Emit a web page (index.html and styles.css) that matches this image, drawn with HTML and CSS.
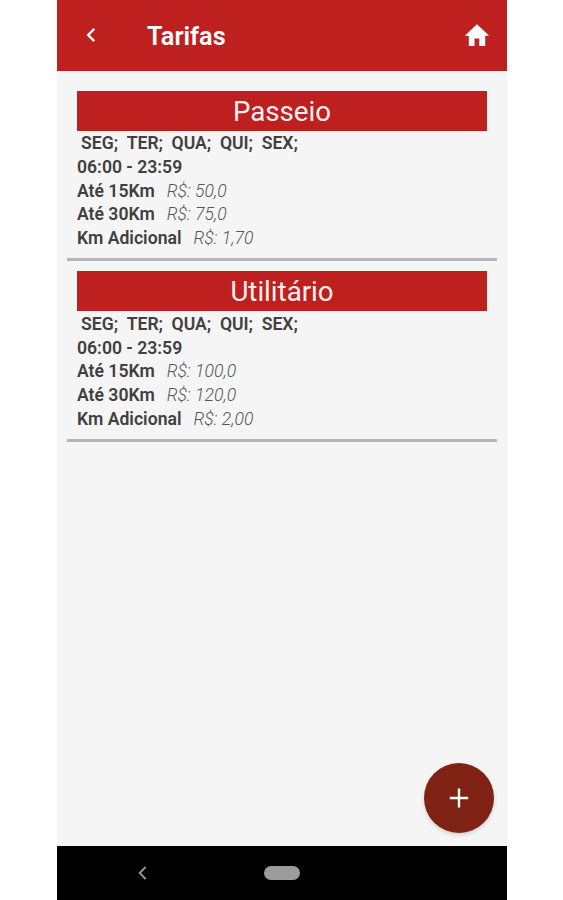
FILE: index.html
```
<!DOCTYPE html>
<html lang="pt-BR">
<head>
  <meta charset="UTF-8">
  <meta name="viewport" content="width=device-width, initial-scale=1.0">
  <title>Tarifas</title>
  <link rel="stylesheet" href="styles.css">
</head>
<body>
  <div class="phone">
    <!-- Top bar -->
    <header class="header">
      <a href="#" class="back" aria-label="Voltar">
        <svg width="10" height="16" viewBox="0 0 10 16"><path d="M8.2 1.9 2.2 8l6 6.1" fill="none" stroke="currentColor" stroke-width="2.4"/></svg>
      </a>
      <h1 class="title">Tarifas</h1>
      <a href="#" class="home" aria-label="Início">
        <svg width="26" height="22" viewBox="0 0 26 22"><path d="M10.5 22v-7.5h4.8V22h5.9V11.8h4L13 .3.8 11.8h4V22z" fill="currentColor"/></svg>
      </a>
    </header>

    <!-- Fare list -->
    <main class="content">
      <section class="fare">
        <h2 class="fare-title">Passeio</h2>
        <p class="days"><span>SEG;</span><span>TER;</span><span>QUA;</span><span>QUI;</span><span>SEX;</span></p>
        <p class="row">06:00 - 23:59</p>
        <p class="row">Até 15Km <em class="price">R$: 50,0</em></p>
        <p class="row">Até 30Km <em class="price">R$: 75,0</em></p>
        <p class="row">Km Adicional <em class="price">R$: 1,70</em></p>
      </section>
      <section class="fare">
        <h2 class="fare-title">Utilitário</h2>
        <p class="days"><span>SEG;</span><span>TER;</span><span>QUA;</span><span>QUI;</span><span>SEX;</span></p>
        <p class="row">06:00 - 23:59</p>
        <p class="row">Até 15Km <em class="price">R$: 100,0</em></p>
        <p class="row">Até 30Km <em class="price">R$: 120,0</em></p>
        <p class="row">Km Adicional <em class="price">R$: 2,00</em></p>
      </section>
    </main>

    <button class="fab" aria-label="Adicionar">
      <svg width="20" height="20" viewBox="0 0 20 20"><path d="M10 .5v19M.8 10h18.4" fill="none" stroke="currentColor" stroke-width="2.4"/></svg>
    </button>

    <!-- Android navigation -->
    <footer class="navbar">
      <svg class="nav-back" width="9" height="14" viewBox="0 0 9 14"><path d="M7.6 1 1.7 7l5.9 6" fill="none" stroke="currentColor" stroke-width="1.8"/></svg>
      <span class="nav-home"></span>
    </footer>
  </div>
</body>
</html>
```
FILE: styles.css
```
:root {
  --primary: #be1f1f;
  --accent: #7f2214;
  --background: #f5f5f5;
  --text: #404040;
}

* {
  margin: 0;
  padding: 0;
  box-sizing: border-box;
}

body {
  background-color: white;
  color: var(--text);
  font-family: Roboto, sans-serif;
}

.phone {
  position: relative;
  display: flex;
  flex-direction: column;
  width: 450px;
  height: 900px;
  margin-left: 57px;
  background-color: var(--background);
  overflow: hidden;
}

.header {
  display: flex;
  align-items: center;
  height: 70.5px;
  padding: 0 17px 0 29px;
  background-color: var(--primary);
  color: white;
}

.back,
.home {
  display: flex;
  color: white;
}

.title {
  margin-left: 51px;
  padding-top: 3px;
  font-size: 25.3px;
  font-weight: 600;
  line-height: 30px;
}

.home {
  margin-left: auto;
}

.content {
  flex: 1;
  padding: 10px;
}

.fare {
  padding: 10px 10px 7.4px;
  border-bottom: 3px solid #b5b5b5;
}

.fare-title {
  height: 40px;
  margin-bottom: 1.5px;
  background-color: var(--primary);
  color: #fff0f0;
  font-size: 27.7px;
  font-weight: 400;
  line-height: 42px;
  text-align: center;
}

.days,
.row {
  font-size: 17.6px;
  font-weight: 600;
  line-height: 23.8px;
}

.days {
  display: flex;
  gap: 8.6px;
  padding-left: 4px;
}

.price {
  margin-left: 7.6px;
  color: #555;
  font-weight: 300;
}

.fab {
  position: absolute;
  right: 13px;
  bottom: 67.5px;
  display: flex;
  align-items: center;
  justify-content: center;
  width: 70px;
  height: 70px;
  border: none;
  border-radius: 50%;
  background-color: var(--accent);
  color: white;
  box-shadow: 0 2px 4px rgba(0, 0, 0, 0.15);
}

.navbar {
  display: flex;
  align-items: center;
  height: 54px;
  padding-left: 81px;
  background-color: black;
  color: #999;
}

.nav-home {
  width: 36px;
  height: 14px;
  margin-left: 117px;
  border-radius: 7px;
  background-color: #9c9c9c;
}
```
